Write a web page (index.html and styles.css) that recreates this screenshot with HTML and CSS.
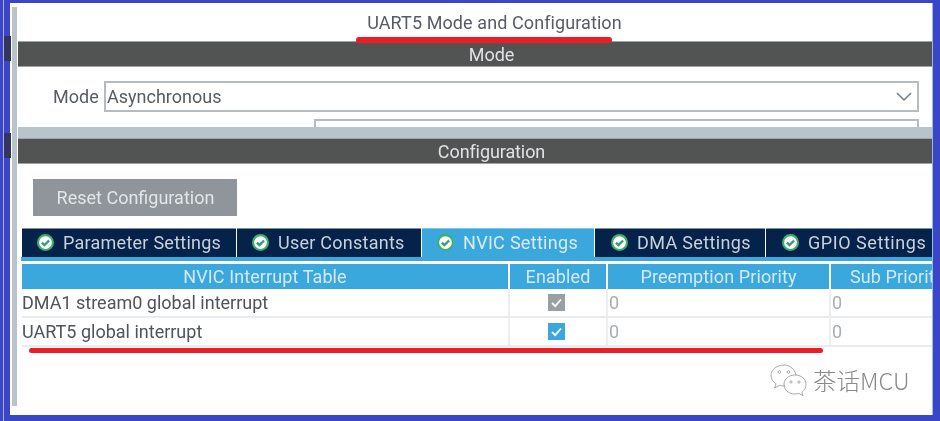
FILE: index.html
```html
<!DOCTYPE html>
<html lang="en">
<head>
<meta charset="utf-8">
<title>UART5 Mode and Configuration</title>
<link rel="stylesheet" href="styles.css">
</head>
<body>
<div class="shot">
  <span class="notch notch-a"></span>
  <span class="notch notch-b"></span>
  <div class="panel">
    <div class="rail"></div>
    <main class="content">
      <h1 class="title">UART5 Mode and Configuration</h1>
      <section class="mode">
        <h2 class="bar">Mode</h2>
        <div class="mode-row">
          <span class="mode-label">Mode</span>
          <div class="select">
            <span>Asynchronous</span>
            <svg class="chevron" viewBox="0 0 16 9"><path d="M1 1l7 7 7-7"/></svg>
          </div>
        </div>
        <div class="select-stub"></div>
      </section>
      <div class="divider"></div>
      <section class="config">
        <h2 class="bar">Configuration</h2>
        <button class="reset">Reset Configuration</button>
        <div class="tabs">
          <div class="tab tab-1"><svg class="ok" viewBox="0 0 16 16"><circle cx="8" cy="8" r="7"/><path d="M4.6 8.200l2.400 2.300 4.400-4.400"/></svg>Parameter Settings</div>
          <div class="tab tab-2"><svg class="ok" viewBox="0 0 16 16"><circle cx="8" cy="8" r="7"/><path d="M4.6 8.200l2.400 2.300 4.400-4.400"/></svg>User Constants</div>
          <div class="tab tab-3 active"><svg class="ok" viewBox="0 0 16 16"><circle cx="8" cy="8" r="7"/><path d="M4.6 8.200l2.400 2.300 4.400-4.400"/></svg>NVIC Settings</div>
          <div class="tab tab-4"><svg class="ok" viewBox="0 0 16 16"><circle cx="8" cy="8" r="7"/><path d="M4.6 8.200l2.400 2.300 4.400-4.400"/></svg>DMA Settings</div>
          <div class="tab tab-5"><svg class="ok" viewBox="0 0 16 16"><circle cx="8" cy="8" r="7"/><path d="M4.6 8.200l2.400 2.300 4.400-4.400"/></svg>GPIO Settings</div>
        </div>
        <div class="table">
          <div class="row head">
            <div class="cell">NVIC Interrupt Table</div>
            <div class="cell">Enabled</div>
            <div class="cell">Preemption Priority</div>
            <div class="cell clip"><span>Sub Priority</span></div>
          </div>
          <div class="row">
            <div class="cell name">DMA1 stream0 global interrupt</div>
            <div class="cell check"><span class="box box-off"><svg viewBox="0 0 17 17"><path d="M4 9l3.200 3.200L13 5.500"/></svg></span></div>
            <div class="cell num">0</div>
            <div class="cell num">0</div>
          </div>
          <div class="row">
            <div class="cell name">UART5 global interrupt</div>
            <div class="cell check"><span class="box box-on"><svg viewBox="0 0 17 17"><path d="M4 9l3.200 3.200L13 5.500"/></svg></span></div>
            <div class="cell num">0</div>
            <div class="cell num">0</div>
          </div>
        </div>
      </section>
    </main>
  </div>
  <span class="redline redline-a"></span>
  <span class="redline redline-b"></span>
  <div class="watermark">
    <svg class="wechat" viewBox="0 0 37 33">
      <path d="M14 1C7 1 1 5.500 1 11.500c0 3.500 2 6.300 5 8.200L4.500 24l5-2.600c1.500.4 3 .6 4.500.6h1.300M26 11C25 5.500 20 1 14 1"/>
      <path d="M25 11c-6.200 0-11 4-11 9.500S18.800 30 25 30c1.300 0 2.600-.2 3.800-.6l4.200 2.300-1.200-3.700c2.600-1.700 4.200-4.400 4.200-7.500C36 15 31.200 11 25 11z"/>
      <circle cx="9.500" cy="8" r="1.300"/><circle cx="18.500" cy="8" r="1.300"/>
      <circle cx="21" cy="18" r="1.100"/><circle cx="29" cy="18" r="1.100"/>
    </svg>
    <span class="wm-text">茶话MCU</span>
  </div>
</div>
</body>
</html>
```
FILE: styles.css
```css
* { box-sizing: border-box; }
html, body { margin: 0; padding: 0; }
body { width: 940px; height: 421px; overflow: hidden; background: #3b45c8; font-family: Roboto, "Liberation Sans", sans-serif; }
.shot { position: relative; width: 940px; height: 421px; padding: 3px 7px 6px 10px; background: linear-gradient(90deg, #3b45c8 3px, #a9b0e4 3px, #a9b0e4 4px, #3b45c8 4px); filter: blur(.45px); }
.panel { display: flex; height: 100%; background: #fff; border-right: 1px solid #8cc0ea; }
.rail { flex: none; width: 5px; margin: 4px 1px 9px 2px; background: #b8c4ca; }
.content { flex: 1; min-width: 0; display: flex; flex-direction: column; overflow: hidden; }
.title { margin: 0; flex: none; height: 38px; display: flex; align-items: center; justify-content: center; padding: 0 0 0 39px; font-size: 18px; font-weight: 400; color: #575c63; letter-spacing: .09px; }
.bar { margin: 0; height: 26px; display: flex; align-items: center; justify-content: center; padding: 1px 0 0 33px; background: #525453; border-top: 1px solid #a0a3a4; border-bottom: 1px solid #a0a3a4; color: #dfe3e6; font-size: 18px; font-weight: 400; letter-spacing: -.1px; }
.mode { flex: none; height: 86px; overflow: hidden; }
.mode-row { display: flex; align-items: center; margin-top: 14px; padding: 0 13px 0 35px; }
.mode-label { width: 51px; font-size: 18px; color: #575c63; }
.select { flex: 1; height: 31px; display: flex; align-items: center; justify-content: space-between; padding: 0 5px 0 1px; border: 2px solid #b5bbbf; font-size: 18px; color: #575c63; }
.chevron { width: 16px; height: 9px; fill: none; stroke: #777d82; stroke-width: 1.500; }
.select-stub { height: 12px; margin: 7px 13px 0 296px; border: 2px solid #b5bbbf; border-bottom: 0; }
.divider { flex: none; height: 11px; background: #b8c4ca; }
.reset { display: block; width: 204px; height: 37px; margin: 15px 0 0 15px; padding: 0 0 0 1px; border: 0; background: #8f959a; color: #e3e6e8; font: 18px Roboto, sans-serif; }
.tabs { display: flex; height: 29px; margin: 12px 0 0 4px; gap: 1px; }
.tab { flex: none; display: flex; align-items: center; height: 29px; padding: 0 0 2px 15px; gap: 9px; background: #04224a; border-top: 1px solid #7e8f9f; color: #c9d2da; font-size: 18px; letter-spacing: .25px; white-space: nowrap; overflow: hidden; }
.tab-1 { width: 214px; }
.tab-2 { width: 184px; }
.tab-3 { width: 172px; letter-spacing: .3px; }
.tab-4 { width: 170px; padding-left: 16px; letter-spacing: .35px; }
.tab-5 { width: 166px; padding-left: 16px; letter-spacing: .55px; }
.tab.active { background: #3aa8dc; border-top-color: #7cc6ea; color: #dceaf3; }
.ok { flex: none; width: 17px; height: 17px; }
.ok circle { fill: #fff; stroke: #3eb06a; stroke-width: 2; }
.ok path { fill: none; stroke: #2f9e78; stroke-width: 2.200; }
.table { position: relative; margin: 7px 0 0 4px; }
.table::before { content: ""; position: absolute; left: -1px; right: 0; top: -7px; height: 4px; background: #3aa8dc; }
.row { display: grid; grid-template-columns: 486px 98px 223px 1fr; height: 29px; border-bottom: 2px solid #e9ebf0; }
.row.head { height: 25px; border-bottom: 0; column-gap: 2px; grid-template-columns: 486px 96px 221px 1fr; }
.head .cell { display: flex; align-items: center; justify-content: center; background: #3aa8dc; color: #d6e8f3; font-size: 18px; letter-spacing: .1px; white-space: nowrap; overflow: hidden; }
.head .clip { justify-content: flex-start; padding-left: 19px; }
.cell { min-width: 0; }
.name, .num { display: flex; align-items: center; font-size: 18px; color: #4f545a; }
.num { padding-left: 1px; color: #a9aeb3; border-left: 2px solid #eceef2; }
.check { display: flex; align-items: center; justify-content: center; border-left: 2px solid #eceef2; padding-right: 4px; }
.box { display: block; width: 17px; height: 17px; }
.box svg { display: block; width: 17px; height: 17px; fill: none; stroke: #fff; stroke-width: 1.800; }
.box-off { background: #9a9fa3; }
.box-on { background: #3aa8dc; }
.notch { position: absolute; left: 4px; width: 7px; height: 25px; background: #33365a; }
.notch-a { top: 36px; }
.notch-b { top: 133px; }
.redline { position: absolute; height: 6px; border-radius: 3px; background: #ee1c25; }
.redline-a { left: 356px; top: 37px; width: 256px; }
.redline-b { left: 29px; top: 348px; width: 794px; height: 5px; }
.watermark { position: absolute; left: 770px; top: 363px; display: flex; align-items: center; gap: 6px; }
.wechat { width: 37px; height: 33px; fill: none; stroke: #a0a0a0; stroke-width: .9; }
.wm-text { font-family: "Noto Sans CJK SC", sans-serif; font-size: 23.500px; font-weight: 300; color: #8a8a8a; }
```
